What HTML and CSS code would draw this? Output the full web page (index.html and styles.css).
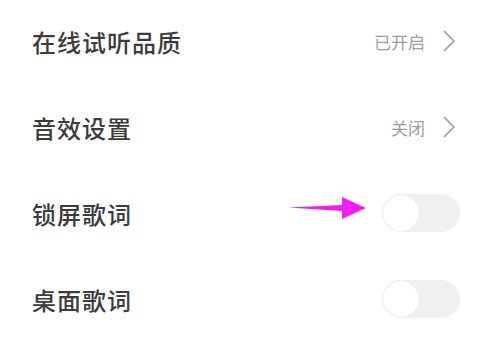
FILE: index.html
```html
<!DOCTYPE html>
<html lang="zh-CN">
<head>
  <meta charset="UTF-8" />
  <title>设置</title>
  <link rel="stylesheet" href="styles.css">
</head>
<body>

<div class="settings">
  <div class="row">
    <span class="label">在线试听品质</span>
    <div class="right">
      <span class="value">已开启</span>
      <svg class="chevron" width="14" height="24" viewBox="0 0 14 24"><path d="M2 2 L12 12 L2 22" fill="none" stroke="#ababab" stroke-width="1.8"/></svg>
    </div>
  </div>

  <div class="row">
    <span class="label">音效设置</span>
    <div class="right">
      <span class="value">关闭</span>
      <svg class="chevron" width="14" height="24" viewBox="0 0 14 24"><path d="M2 2 L12 12 L2 22" fill="none" stroke="#ababab" stroke-width="1.8"/></svg>
    </div>
  </div>

  <div class="row">
    <span class="label">锁屏歌词</span>
    <div class="toggle"><div class="knob"></div></div>
    <!-- annotation arrow -->
    <svg class="pointer" width="80" height="24" viewBox="0 0 80 24">
      <path d="M0 10.5 L54 8 L54 0 L78 11 L54 22 L54 14 Z" fill="#f01ff0"/>
    </svg>
  </div>

  <div class="row">
    <span class="label">桌面歌词</span>
    <div class="toggle"><div class="knob"></div></div>
  </div>
</div>

</body>
</html>
```

FILE: styles.css
```css
body {
  margin: 0;
  background: #fff;
  font-family: "Noto Sans CJK SC", "Noto Sans", sans-serif;
}

.settings {
  width: 477px;
  margin-top: -2px;
}

.row {
  position: relative;
  height: 86px;
  display: flex;
  align-items: center;
  justify-content: space-between;
  padding: 0 17px 0 32px;
}

.label {
  font-size: 24px;
  font-weight: 500;
  letter-spacing: 1px;
  color: #3c3c3c;
}

.right {
  display: flex;
  align-items: center;
  gap: 17px;
  padding-right: 4px;
}

.value {
  font-size: 17px;
  color: #9e9e9e;
}

.chevron {
  display: block;
}

.toggle {
  width: 78px;
  height: 38px;
  border-radius: 19px;
  background: #f0f0f0;
  position: relative;
}

.knob {
  position: absolute;
  left: 1px;
  top: 1px;
  width: 36px;
  height: 36px;
  border-radius: 50%;
  background: #fff;
  box-shadow: 0 0 1px rgba(0,0,0,0.1);
}

.pointer {
  position: absolute;
  left: 288px;
  top: 27px;
}
```
